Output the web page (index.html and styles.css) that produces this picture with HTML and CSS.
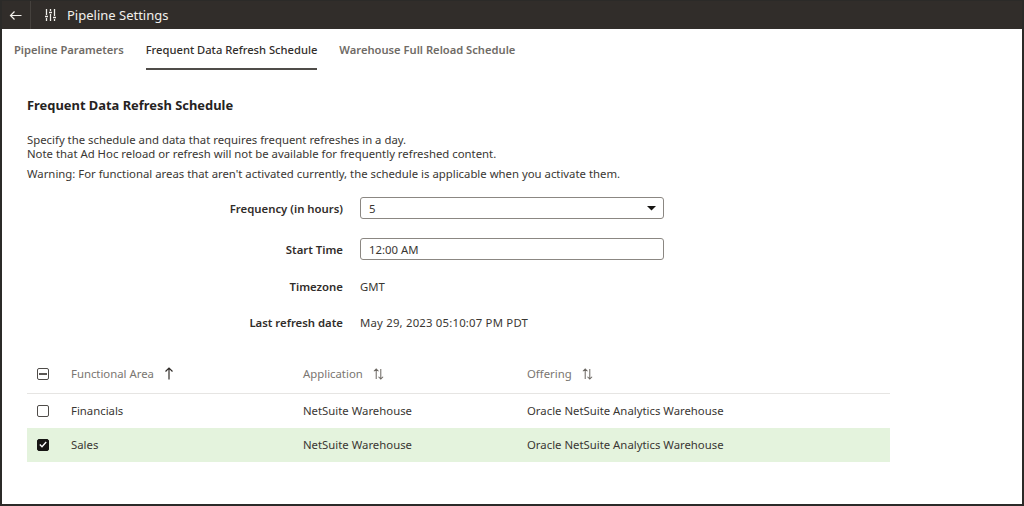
FILE: index.html
```html
<!DOCTYPE html>
<html lang="en">
<head>
<meta charset="utf-8">
<title>Pipeline Settings</title>
<link rel="stylesheet" href="styles.css">
</head>
<body>
<div class="frame">
  <header class="topbar">
    <button class="back" aria-label="Back">
      <svg width="13" height="11" viewBox="0 0 13 11"><path d="M12.500 5.500H1.500M5.500 1.500 1.500 5.500 5.500 9.500" fill="none" stroke="#f2f0ec" stroke-width="1.200"/></svg>
    </button>
    <svg class="sliders" width="11" height="12" viewBox="0 0 11 12"><path d="M1.500 0v6M1.500 9v3M5.500 0v2M5.500 5v7M9.500 0v7M9.500 10v2M0 7.500h3M4 3.500h3M8 8.500h3" fill="none" stroke="#f2f0ec" stroke-width="1.300"/></svg>
    <h1 class="title">Pipeline Settings</h1>
  </header>
  <nav class="tabs">
    <a class="tab">Pipeline Parameters</a>
    <a class="tab active">Frequent Data Refresh Schedule</a>
    <a class="tab">Warehouse Full Reload Schedule</a>
  </nav>
  <main class="content">
    <h2 class="heading">Frequent Data Refresh Schedule</h2>
    <p class="intro">Specify the schedule and data that requires frequent refreshes in a day.<br>Note that Ad Hoc reload or refresh will not be available for frequently refreshed content.</p>
    <p class="warning">Warning: For functional areas that aren't activated currently, the schedule is applicable when you activate them.</p>
    <div class="form">
      <label class="label row-a">Frequency (in hours)</label>
      <div class="field row-a"><span>5</span><svg width="9" height="5" viewBox="0 0 9 5"><path d="M0 0h9L4.500 4.500z" fill="#161513"/></svg></div>
      <label class="label row-b">Start Time</label>
      <div class="field row-b"><span>12:00 AM</span></div>
      <span class="label row-c">Timezone</span>
      <span class="value row-c">GMT</span>
      <span class="label row-d">Last refresh date</span>
      <span class="value row-d">May 29, 2023 05:10:07 PM PDT</span>
    </div>
    <div class="table">
      <div class="tr thead">
        <div class="c-check"><span class="box"><svg width="8" height="2" viewBox="0 0 8 2"><path d="M0 1h8" stroke="#312d2a" stroke-width="1.600"/></svg></span></div>
        <div class="c-area">Functional Area<svg class="sort" width="10" height="13" viewBox="0 0 10 13"><path d="M5 12.500V1M1.500 4.500 5 1l3.500 3.500" fill="none" stroke="#312d2a" stroke-width="1.200"/></svg></div>
        <div class="c-app">Application<svg class="sort" width="11" height="12" viewBox="0 0 12 13"><path d="M3.500 12V1M1 3.500 3.500 1 6 3.500M8.500 1v11M6 9.500 8.500 12 11 9.500" fill="none" stroke="#6b6762" stroke-width="1.100"/></svg></div>
        <div class="c-off">Offering<svg class="sort" width="11" height="12" viewBox="0 0 12 13"><path d="M3.500 12V1M1 3.500 3.500 1 6 3.500M8.500 1v11M6 9.500 8.500 12 11 9.500" fill="none" stroke="#6b6762" stroke-width="1.100"/></svg></div>
      </div>
      <div class="tr">
        <div class="c-check"><span class="box"></span></div>
        <div class="c-area">Financials</div>
        <div class="c-app">NetSuite Warehouse</div>
        <div class="c-off">Oracle NetSuite Analytics Warehouse</div>
      </div>
      <div class="tr selected">
        <div class="c-check"><span class="box checked"><svg width="8" height="7" viewBox="0 0 8 7"><path d="M.8 3.500 3 5.700 7.200 1" fill="none" stroke="#fff" stroke-width="1.400"/></svg></span></div>
        <div class="c-area">Sales</div>
        <div class="c-app">NetSuite Warehouse</div>
        <div class="c-off">Oracle NetSuite Analytics Warehouse</div>
      </div>
    </div>
  </main>
</div>
</body>
</html>
```
FILE: styles.css
```css
* { box-sizing: border-box; }
html, body { margin: 0; height: 100%; }
body {
  font-family: "Noto Sans", "Open Sans", sans-serif;
  font-size: 11.350px;
  color: #3a3733;
  background: #fff;
}
.frame {
  width: 1024px;
  height: 506px;
  border: 1px solid #2b2a28;
  border-width: 1px 2px 2px 2px;
  overflow: hidden;
}
.topbar {
  height: 28px;
  background: #312d2a;
  display: flex;
  align-items: center;
  color: #f2f0ec;
}
.back {
  width: 29px;
  height: 28px;
  padding: 0 2px 0 0;
  border: 0;
  border-right: 1px solid #45413d;
  background: transparent;
  display: flex;
  align-items: center;
  justify-content: center;
}
.sliders { margin-left: 14px; }
.title {
  margin: 0 0 1px 11px;
  font-size: 13px;
  font-weight: 400;
}
.tabs {
  display: flex;
  gap: 22px;
  padding-left: 12px;
  height: 41px;
}
.tab {
  height: 41px;
  line-height: 42px;
  font-size: 11.180px;
  font-weight: 600;
  color: #6f6b66;
}
.tab.active {
  color: #312d2a;
  font-weight: 500;
  border-bottom: 2px solid #4f4c49;
}
.content { padding: 26px 0 0 25px; }
.heading {
  margin: 0;
  font-size: 12.900px;
  font-weight: 700;
  line-height: 19px;
  color: #26231f;
}
.intro { margin: 18px 0 0; line-height: 14px; }
.warning { margin: 6px 0 0; line-height: 14px; }
.form {
  display: grid;
  grid-template-columns: 316px 304px;
  column-gap: 17px;
  grid-template-rows: 22px 41px 36px 36px;
  margin-top: 16px;
  align-items: center;
}
.row-a { grid-row: 1; }
.row-b { grid-row: 2; align-self: end; }
.label { grid-column: 1; text-align: right; font-weight: 600; color: #312d2a; }
.label.row-b { padding-bottom: 3px; }
.field, .value { grid-column: 2; }
.row-c { grid-row: 3; align-self: end; padding-bottom: 2px; }
.row-d { grid-row: 4; align-self: end; padding-bottom: 2px; }
.value.row-d { letter-spacing: .2px; }
.field {
  height: 22px;
  border: 1px solid #8b8782;
  border-radius: 3px;
  padding: 0 7px 0 8px;
  display: flex;
  align-items: center;
  justify-content: space-between;
}
.table { width: 863px; margin-top: 25px; }
.tr {
  display: grid;
  grid-template-columns: 44px 232px 224px 1fr;
  align-items: center;
  height: 34px;
  padding-bottom: 1px;
}
.thead {
  height: 37px;
  padding-bottom: 3px;
  border-bottom: 1px solid #e6e5e3;
  color: #7a7671;
}
.selected { background: #e4f3dd; }
.c-check { padding-left: 10px; display: flex; }
.box {
  width: 12px;
  height: 12px;
  border: 1.300px solid #4f4c49;
  border-radius: 2px;
  display: flex;
  align-items: center;
  justify-content: center;
}
.box.checked { background: #161513; border-color: #161513; }
.c-area, .c-app, .c-off { display: flex; align-items: center; }
.sort { margin-left: 10px; }
```
